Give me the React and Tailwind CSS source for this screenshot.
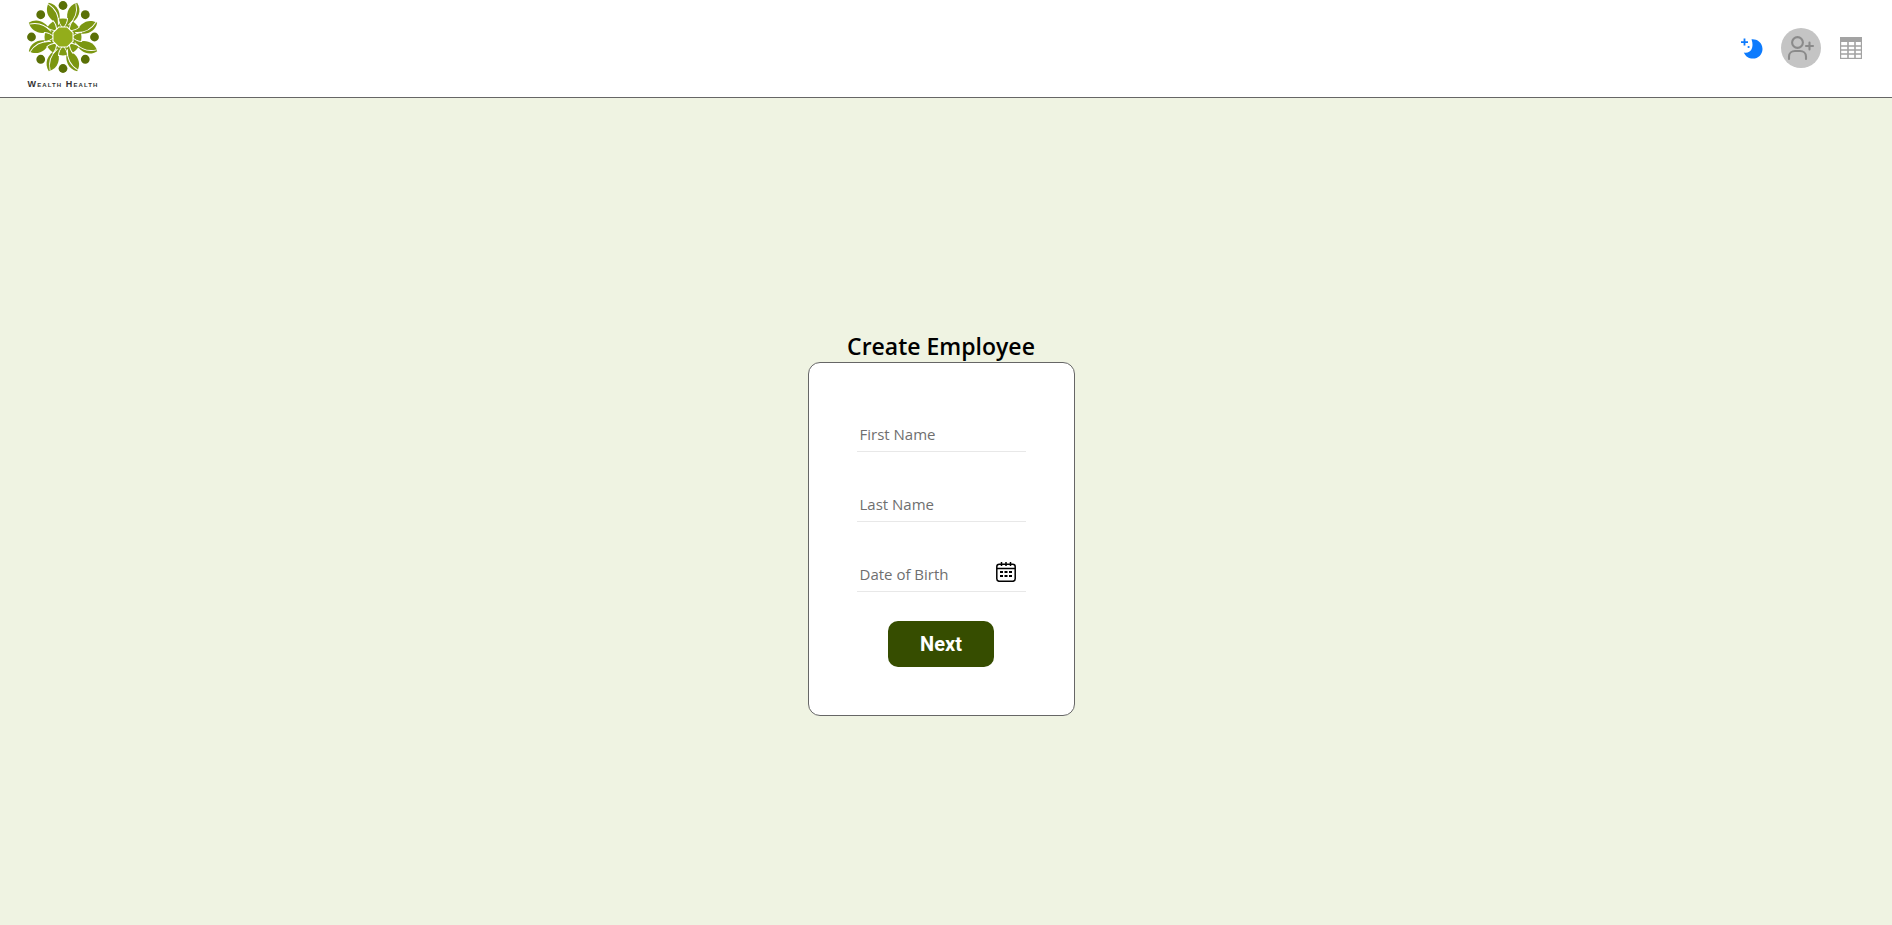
const angles = [0, 45, 90, 135, 180, 225, 270, 315];

const Logo = () => (
  <svg width="76" height="74" viewBox="-38 -37 76 74" className="block">
    <circle r="18.5" fill="#7f9b12" />
    {angles.map((a) => (
      <g key={a} transform={`rotate(${a})`}>
        <circle cx="0" cy="-31.5" r="4.4" fill="#5a7006" />
        <g transform="rotate(22.5)">
          <path d="M0 -37C7.5 -32 8 -22 1 -14C-6.5 -20 -8 -31 0 -37Z" fill="#7b9610" />
          <path d="M-1 -36C4 -29 4.5 -21 0.5 -13" fill="none" stroke="#fff" strokeWidth="0.9" />
        </g>
      </g>
    ))}
    {angles.map((a) => (
      <g key={a} transform={`rotate(${a})`}>
        <path d="M0 -9C-3 -12 -4.5 -15 -4.5 -19" fill="none" stroke="#fff" strokeWidth="1" />
        <path d="M0 -9C3 -12 4.5 -15 4.5 -19" fill="none" stroke="#fff" strokeWidth="1" />
      </g>
    ))}
    <polygon points="-4.4,-10.6 4.4,-10.6 10.6,-4.4 10.6,4.4 4.4,10.6 -4.4,10.6 -10.6,4.4 -10.6,-4.4" fill="#fff" />
    <polygon points="-3.9,-9.5 3.9,-9.5 9.5,-3.9 9.5,3.9 3.9,9.5 -3.9,9.5 -9.5,3.9 -9.5,-3.9" fill="#93ad1b" />
  </svg>
);

const MoonIcon = () => (
  <svg width="24" height="24" viewBox="0 0 24 24" fill="#0d7bfd">
    <path d="M11.5 3.2C16 2.6 22.5 5.8 22.5 13C22.5 18.6 18 22.6 13 22.6C8.8 22.6 5.4 20.2 3.8 16.4C9.5 18 14.8 13 11.5 3.2Z" />
    <path d="M3.6 2.6H5.4V5.2H8V7H5.4V9.6H3.6V7H1V5.2H3.6Z" />
    <circle cx="8.6" cy="11" r="1.1" />
  </svg>
);

const UserPlusIcon = () => (
  <svg width="28" height="26" viewBox="0 0 28 26" fill="none" stroke="#8a8a8a" strokeWidth="2.1" strokeLinecap="round">
    <circle cx="10.5" cy="7.5" r="5.4" />
    <path d="M2 24V21.5C2 18 4.8 16 8 16H13C16.2 16 19 18 19 21.5V24" />
    <path d="M22.5 7.5V14.5M19 11H26" />
  </svg>
);

const TableIcon = () => (
  <svg width="22" height="22" viewBox="0 0 22 22" fill="none" stroke="#a3a3a3">
    <rect x="0.5" y="0.5" width="21" height="21" fill="#fff" strokeWidth="1.4" />
    <rect x="0" y="0" width="22" height="5" fill="#a3a3a3" stroke="none" />
    <path d="M0 9H22M0 13H22M0 17H22M8 5V22M15 5V22" strokeWidth="1.6" />
  </svg>
);

const CalendarIcon = () => (
  <svg width="20" height="20" viewBox="0 0 20 20" fill="none" stroke="#000" strokeWidth="1.5" className="absolute right-[10px] top-[2px]">
    <rect x="0.8" y="2.3" width="18.4" height="17" rx="2.5" />
    <path d="M1 6.5H19" />
    <path d="M5.5 0V4M10 0V4M14.5 0V4" />
    <path d="M4 10H7M8.5 10H11.5M13 10H16M4 14H7M8.5 14H11.5M13 14H16" strokeWidth="2" />
  </svg>
);

const Field = ({ placeholder, children }) => (
  <div className="relative border-b border-[#e8e8e8] h-[32px]">
    <input
      type="text"
      placeholder={placeholder}
      className="w-full h-full px-[3px] pb-[4px] text-[15px] outline-none placeholder:text-[#6f6f6f] font-['Open_Sans',sans-serif]"
    />
    {children}
  </div>
);

export default function App() {
  return (
    <div className="min-h-[925px] bg-[#eff3e2] flex flex-col">
      <header className="h-[98px] bg-white border-b border-[#666] flex items-start justify-between pl-[25px] pr-[30px]">
        <div className="flex flex-col items-center">
          <Logo />
          <span className="mt-[5px] text-[9px] leading-[10px] tracking-[1.1px] text-[#333] font-['Liberation_Sans',sans-serif] [font-variant:small-caps] font-bold">
            Wealth Health
          </span>
        </div>
        <nav className="flex items-center gap-[19px] h-[95px]">
          <MoonIcon />
          <div className="w-[40px] h-[40px] -ml-[2px] rounded-full bg-[#c4c4c4] flex items-center justify-center">
            <UserPlusIcon />
          </div>
          <TableIcon />
        </nav>
      </header>
      <main className="flex flex-col items-center pt-[233px] pr-[10px]">
        <h1 className="text-[23px] leading-[31px] font-semibold text-black font-['Open_Sans',sans-serif]">
          Create Employee
        </h1>
        <form className="w-[267px] h-[354px] bg-white border border-[#666] rounded-[12px] px-[48px] pt-[57px] flex flex-col">
          <div className="flex flex-col gap-[38px]">
            <Field placeholder="First Name" />
            <Field placeholder="Last Name" />
            <Field placeholder="Date of Birth">
              <CalendarIcon />
            </Field>
          </div>
          <button
            type="button"
            className="w-[106px] h-[46px] self-center mt-[29px] rounded-[10px] bg-[#364d00] text-white text-[20px] font-bold font-['Roboto',sans-serif]"
          >
            Next
          </button>
        </form>
      </main>
    </div>
  );
}
